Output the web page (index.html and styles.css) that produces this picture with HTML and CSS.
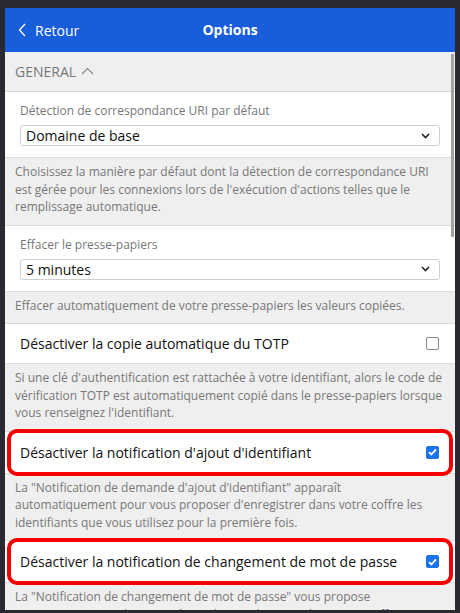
FILE: index.html
```html
<!DOCTYPE html>
<html lang="fr">
<head>
<meta charset="utf-8">
<title>Options</title>
<link rel="stylesheet" href="styles.css">
</head>
<body>
<div class="app">
  <header class="topbar">
    <a class="back">
      <svg class="back-icon" width="8" height="14" viewBox="0 0 8 14"><path d="M7 1 L1.5 7 L7 13" fill="none" stroke="#fff" stroke-width="1.3"/></svg>
      <span>Retour</span>
    </a>
    <h1 class="title">Options</h1>
  </header>
  <main class="content">
    <div class="scroll-thumb"></div>
    <div class="section-head">
      <span>GENERAL</span>
      <svg class="up-icon" width="13" height="8" viewBox="0 0 13 8"><path d="M1 7 L6.5 1.5 L12 7" fill="none" stroke="#888" stroke-width="1.2"/></svg>
    </div>

    <div class="field">
      <label class="field-label">Détection de correspondance URI par défaut</label>
      <div class="select">
        <span>Domaine de base</span>
        <svg class="down-icon" width="9" height="6" viewBox="0 0 9 6"><path d="M1 1 L4.5 4.5 L8 1" fill="none" stroke="#222" stroke-width="1.6"/></svg>
      </div>
    </div>
    <p class="help">Choisissez la manière par défaut dont la détection de correspondance URI est gérée pour les connexions lors de l'exécution d'actions telles que le remplissage automatique.</p>

    <div class="field">
      <label class="field-label">Effacer le presse-papiers</label>
      <div class="select">
        <span>5 minutes</span>
        <svg class="down-icon" width="9" height="6" viewBox="0 0 9 6"><path d="M1 1 L4.5 4.5 L8 1" fill="none" stroke="#222" stroke-width="1.6"/></svg>
      </div>
    </div>
    <p class="help">Effacer automatiquement de votre presse-papiers les valeurs copiées.</p>

    <div class="row">
      <span>Désactiver la copie automatique du TOTP</span>
      <span class="check"></span>
    </div>
    <p class="help">Si une clé d'authentification est rattachée à votre identifiant, alors le code de vérification TOTP est automatiquement copié dans le presse-papiers lorsque vous renseignez l'identifiant.</p>

    <div class="row highlighted">
      <span>Désactiver la notification d'ajout d'identifiant</span>
      <span class="check checked"><svg width="9" height="8" viewBox="0 0 9 8"><path d="M1 4.2 L3.4 6.4 L8 1.4" fill="none" stroke="#fff" stroke-width="1.8"/></svg></span>
    </div>
    <p class="help">La "Notification de demande d'ajout d'identifiant" apparaît automatiquement pour vous proposer d'enregistrer dans votre coffre les identifiants que vous utilisez pour la première fois.</p>

    <div class="row highlighted">
      <span>Désactiver la notification de changement de mot de passe</span>
      <span class="check checked"><svg width="9" height="8" viewBox="0 0 9 8"><path d="M1 4.2 L3.4 6.4 L8 1.4" fill="none" stroke="#fff" stroke-width="1.8"/></svg></span>
    </div>
    <p class="help">La "Notification de changement de mot de passe" vous propose automatiquement de mettre à jour le mot de passe dans votre coffre lorsqu'elle détecte qu'il a été modifié sur un site web.</p>
  </main>
</div>
</body>
</html>
```

FILE: styles.css
```css
* { box-sizing: border-box; }
html, body { margin: 0; padding: 0; }
body {
  background: #2a2830;
  font-family: "Open Sans", "Noto Sans", sans-serif;
  overflow: hidden;
  height: 613px;
}
.app {
  margin: 8px 5px 0 5px;
  width: 450px;
  height: 602px;
  display: flex;
  flex-direction: column;
  background: #efefef;
  overflow: hidden;
}
.topbar {
  height: 44px;
  flex: none;
  background: #175ddc;
  display: flex;
  align-items: center;
  position: relative;
  color: #fff;
}
.back {
  display: flex;
  align-items: center;
  gap: 9px;
  padding-left: 13px;
  font-size: 14px;
  color: #fff;
}
.title {
  position: absolute;
  left: 0;
  right: 0;
  top: 0;
  margin: 0;
  line-height: 44px;
  text-align: center;
  font-size: 14px;
  font-weight: 700;
  pointer-events: none;
}
.content {
  position: relative;
  flex: 1;
  overflow: hidden;
}
.scroll-thumb {
  position: absolute;
  right: 1px;
  top: 2px;
  width: 3px;
  height: 183px;
  background: #a3a3a3;
  z-index: 3;
}
.section-head {
  height: 40px;
  display: flex;
  align-items: center;
  gap: 5px;
  padding-left: 10px;
  color: #777;
  font-size: 14px;
  border-bottom: 1px solid #dcdcdc;
}
.up-icon { margin-top: -2px; }
.field {
  background: #fff;
  padding: 10px 15px 11px 15px;
  border-bottom: 1px solid #dcdcdc;
}
.field-label {
  display: block;
  font-size: 12px;
  line-height: 18px;
  color: #777;
  margin-bottom: 5px;
}
.select {
  height: 21px;
  border: 1px solid #cfcfcf;
  border-radius: 3px;
  display: flex;
  align-items: center;
  justify-content: space-between;
  padding: 0 9px 0 5px;
  font-size: 14px;
  color: #111;
}
.help {
  margin: 0;
  padding: 5px 10px 9px 10px;
  font-size: 12px;
  line-height: 17.5px;
  color: #777;
  border-bottom: 1px solid #dcdcdc;
}
.row {
  position: relative;
  background: #fff;
  height: 40px;
  display: flex;
  align-items: center;
  justify-content: space-between;
  padding: 0 16px 0 15px;
  font-size: 14px;
  color: #111;
  border-bottom: 1px solid #dcdcdc;
}
.row.highlighted {
  height: 42px;
}
.highlighted::after {
  content: "";
  position: absolute;
  left: 2px;
  right: 2px;
  top: -3px;
  bottom: -3px;
  border: 4px solid #f50000;
  border-radius: 10px;
  z-index: 2;
}
.check {
  width: 13px;
  height: 13px;
  border: 1.5px solid #8a8690;
  border-radius: 2px;
  display: flex;
  align-items: center;
  justify-content: center;
}
.check.checked {
  background: #1a73e8;
  border-color: #1a73e8;
}
```
